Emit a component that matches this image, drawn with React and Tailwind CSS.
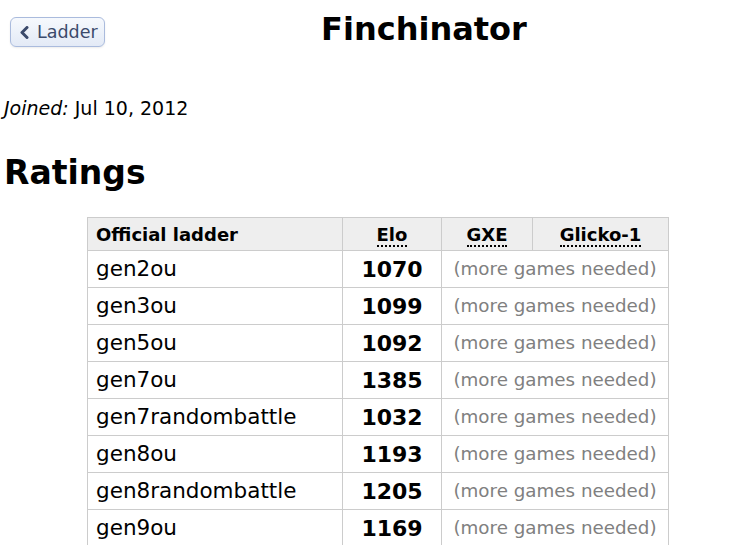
const ratings = [
  { format: "gen2ou", elo: 1070 },
  { format: "gen3ou", elo: 1099 },
  { format: "gen5ou", elo: 1092 },
  { format: "gen7ou", elo: 1385 },
  { format: "gen7randombattle", elo: 1032 },
  { format: "gen8ou", elo: 1193 },
  { format: "gen8randombattle", elo: 1205 },
  { format: "gen9ou", elo: 1169 },
];

export default function App() {
  return (
    <div className="min-h-[545px] bg-white text-black font-['DejaVu_Sans',Verdana,sans-serif]">
      {/* header */}
      <div className="flex items-start">
        <div className="w-[109px] shrink-0 pl-[10px] pt-[17px]">
          <button
            type="button"
            className="flex h-[30px] w-[95px] items-center gap-[8px] rounded-[6px] border border-[#aabbdd] bg-gradient-to-b from-[#f6f9fd] to-[#e3eaf6] pl-[8px] text-[17.5px] text-[#3b4a6b] shadow-[0_1px_2px_rgba(0,0,0,0.08)]"
          >
            <svg width="10" height="13" viewBox="0 0 10 13" className="shrink-0">
              <path
                d="M8 1.5 L3 6.5 L8 11.5"
                fill="none"
                stroke="currentColor"
                strokeWidth="3"
                strokeLinecap="round"
                strokeLinejoin="round"
              />
            </svg>
            Ladder
          </button>
        </div>
        <h1 className="flex-1 pt-[9px] text-center text-[32px] font-bold leading-[40px]">
          Finchinator
        </h1>
      </div>

      <p className="mt-[47px] pl-[4px] text-[19px] leading-[24px]">
        <em>Joined:</em> Jul 10, 2012
      </p>

      <h2 className="mt-[33px] pl-[4px] text-[33px] font-bold leading-[40px]">
        Ratings
      </h2>

      {/* ratings table */}
      <table className="mt-[24px] ml-[87px] w-[582px] border-collapse">
        <thead>
          <tr className="h-[33px] bg-[#eeeeee] text-[18px] font-bold">
            <th className="w-[255px] border border-[#cccccc] pl-[8px] text-left">
              Official ladder
            </th>
            <th className="w-[99px] border border-[#cccccc] text-center">
              <abbr className="no-underline border-b-2 border-dotted border-black">Elo</abbr>
            </th>
            <th className="w-[91px] border border-[#cccccc] text-center">
              <abbr className="no-underline border-b-2 border-dotted border-black">GXE</abbr>
            </th>
            <th className="border border-[#cccccc] text-center">
              <abbr className="no-underline border-b-2 border-dotted border-black">Glicko-1</abbr>
            </th>
          </tr>
        </thead>
        <tbody>
          {ratings.map((r) => (
            <tr key={r.format} className="h-[37px]">
              <td className="border border-[#cccccc] pl-[8px] text-[21.5px]">{r.format}</td>
              <td className="border border-[#cccccc] text-center text-[22px] font-bold">{r.elo}</td>
              <td colSpan={2} className="border border-[#cccccc] text-center text-[18.3px] text-[#808080]">
                (more games needed)
              </td>
            </tr>
          ))}
        </tbody>
      </table>
    </div>
  );
}
